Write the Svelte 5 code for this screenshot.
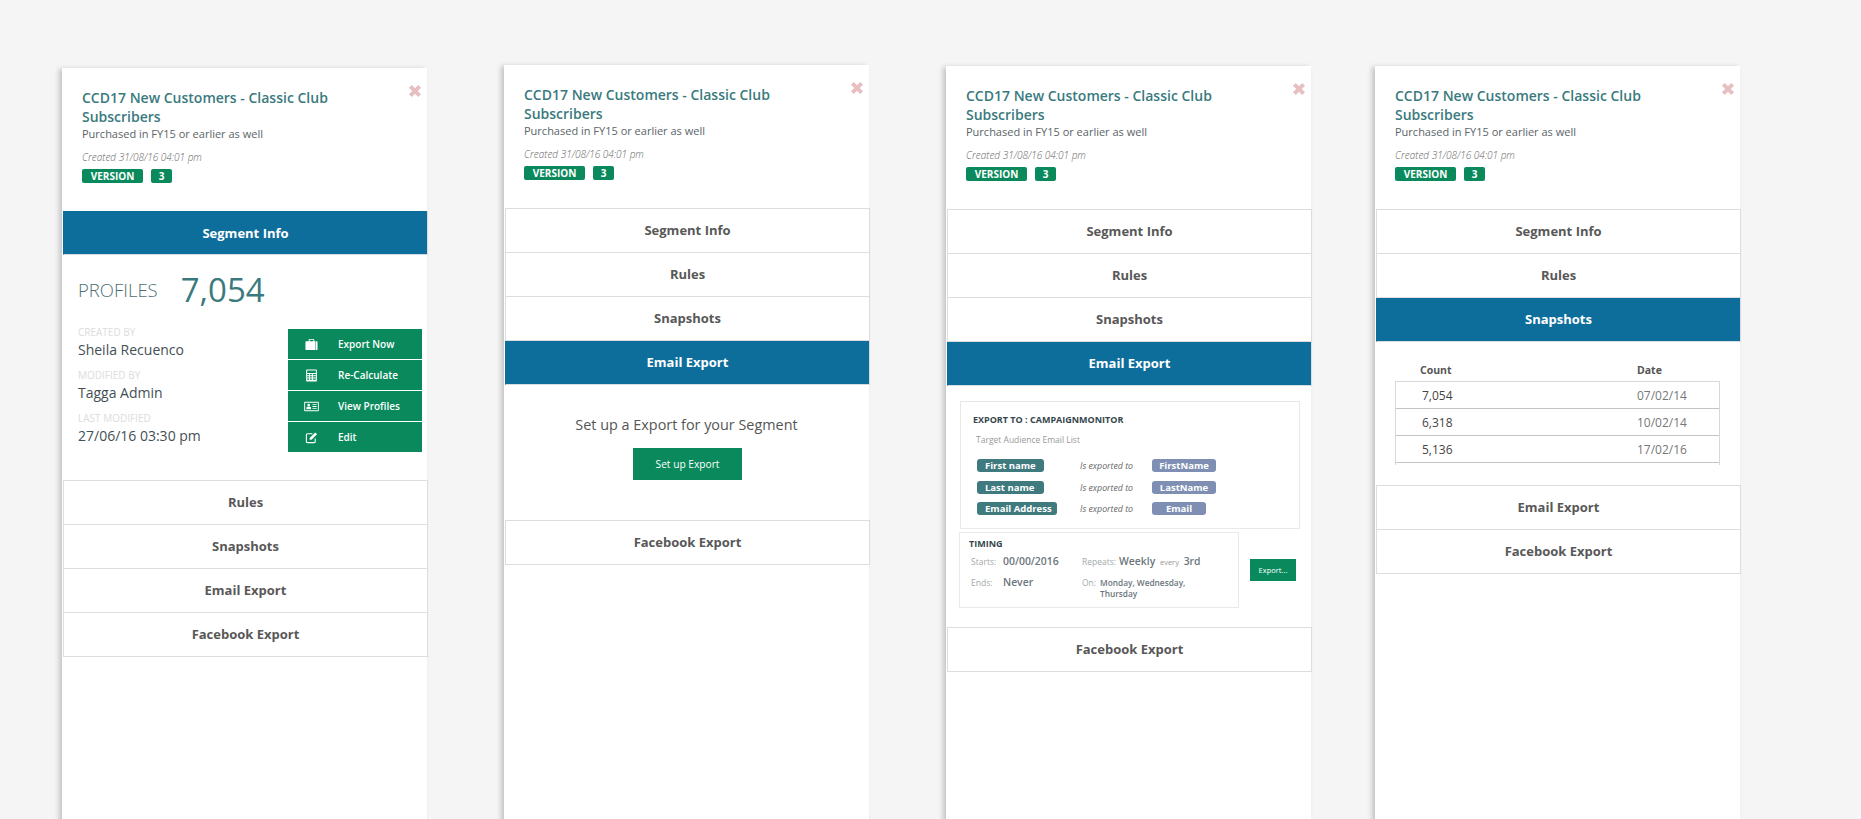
<script>
  const title = 'CCD17 New Customers - Classic Club Subscribers';
  const mappings = [
    { from: 'First name', to: 'FirstName', fromW: 67, toW: 64 },
    { from: 'Last name', to: 'LastName', fromW: 67, toW: 64 },
    { from: 'Email Address', to: 'Email', fromW: 80, toW: 54 }
  ];
  const snapshots = [
    { count: '7,054', date: '07/02/14' },
    { count: '6,318', date: '10/02/14' },
    { count: '5,136', date: '17/02/16' }
  ];
  const meta = [
    { label: 'CREATED BY', value: 'Sheila Recuenco' },
    { label: 'MODIFIED BY', value: 'Tagga Admin' },
    { label: 'LAST MODIFIED', value: '27/06/16 03:30 pm' }
  ];
</script>

{#snippet header()}
  <div class="head">
    <svg class="close" viewBox="0 0 12 12" aria-hidden="true"><path d="M2 2 L10 10 M10 2 L2 10" stroke="#e8bfc0" stroke-width="3.4" /></svg>
    <h2>{title}</h2>
    <p class="sub">Purchased in FY15 or earlier as well</p>
    <p class="created">Created 31/08/16 04:01 pm</p>
    <div class="badges">
      <span class="badge version">VERSION</span>
      <span class="badge num">3</span>
    </div>
  </div>
{/snippet}

{#snippet tab(label, active = false)}
  <div class="tab" class:active>{label}</div>
{/snippet}

<div class="page">
  <section class="card c1">
    {@render header()}
    {@render tab('Segment Info', true)}
    <div class="info">
      <div class="profiles">
        <span class="pl">PROFILES</span>
        <span class="pn">7,054</span>
      </div>
      <div class="info-row">
        <div class="meta">
          {#each meta as m}
            <div class="mlabel">{m.label}</div>
            <div class="mvalue">{m.value}</div>
          {/each}
        </div>
        <div class="actions">
          <button>
            <svg viewBox="0 0 14 14"><path fill="#fff" fill-rule="evenodd" d="M1 3.5h2V13H1.500a1 1 0 0 1-1-1V4.500a1 1 0 0 1 .5-1zM4 3.500V2a1 1 0 0 1 1-1h4a1 1 0 0 1 1 1v1.500h1V13H3V3.500zM5 3.500h4V2H5zM11.500 3.500H13a1 1 0 0 1 .5 1V12a1 1 0 0 1-1 1h-1z" /></svg>
            Export Now
          </button>
          <button>
            <svg viewBox="0 0 14 14"><path fill="#fff" fill-rule="evenodd" d="M2 .5h10a.8.8 0 0 1 .8.8v11.400a.8.8 0 0 1-.8.8H2a.8.8 0 0 1-.8-.8V1.300A.8.8 0 0 1 2 .5zM2.300 1.700v2.500h9.400V1.700zM2.300 5.300v1.500h2V5.300zm3 0v1.500h2V5.300zm3.200 0v1.500h3.200V5.300zM2.300 7.700v1.500h2V7.700zm3 0v1.500h2V7.700zm3.200 0v1.500h3.200V7.700zM2.300 10.100v1.500h2v-1.500zm3 0v1.500h2v-1.500zm3.200 0v1.500h3.200v-1.500z" /></svg>
            Re-Calculate
          </button>
          <button>
            <svg class="wide" viewBox="0 0 16 12"><path fill="#fff" fill-rule="evenodd" d="M1 1h14a.8.8 0 0 1 .8.8v8.400a.8.8 0 0 1-.8.8H1a.8.8 0 0 1-.8-.8V1.800A.8.8 0 0 1 1 1zM1.200 2v8h13.600V2zM5 3a1.400 1.400 0 1 1 0 2.900A1.400 1.400 0 0 1 5 3zM2.500 9V7.500c0-.8.8-1.200 1.500-1.200h2c.7 0 1.500.4 1.500 1.200V9zM9 3.500h4.500v1H9zm0 2h4.500v1H9zm0 2h4.500v1H9z" /></svg>
            View Profiles
          </button>
          <button>
            <svg viewBox="0 0 14 14"><path fill="none" stroke="#fff" stroke-width="1.200" d="M11 8v3.500a1 1 0 0 1-1 1H2.500a1 1 0 0 1-1-1V4a1 1 0 0 1 1-1H8" /><path fill="#fff" d="M5 7.500 11 1.500l2 2-6 6H5z" /></svg>
            Edit
          </button>
        </div>
      </div>
    </div>
    {@render tab('Rules')}
    {@render tab('Snapshots')}
    {@render tab('Email Export')}
    {@render tab('Facebook Export')}
  </section>

  <section class="card c2">
    {@render header()}
    {@render tab('Segment Info')}
    {@render tab('Rules')}
    {@render tab('Snapshots')}
    {@render tab('Email Export', true)}
    <div class="setup">
      <p>Set up a Export for your Segment</p>
      <button>Set up Export</button>
    </div>
    {@render tab('Facebook Export')}
  </section>

  <section class="card c3">
    {@render header()}
    {@render tab('Segment Info')}
    {@render tab('Rules')}
    {@render tab('Snapshots')}
    {@render tab('Email Export', true)}
    <div class="export">
      <div class="target">
        <h3>EXPORT TO : CAMPAIGNMONITOR</h3>
        <p class="list">Target Audience Email List</p>
        <div class="maps">
          {#each mappings as m}
            <span class="pill from" style="width:{m.fromW}px">{m.from}</span>
            <span class="arrow">Is exported to</span>
            <span class="pill to" style="width:{m.toW}px">{m.to}</span>
          {/each}
        </div>
      </div>
      <div class="timing-row">
        <div class="timing">
          <h3>TIMING</h3>
          <div class="t-grid">
            <span class="k">Starts:</span><b>00/00/2016</b>
            <span class="k">Repeats:</span><span class="rep"><b>Weekly</b> <i>every</i> <b>3rd</b></span>
            <span class="k">Ends:</span><b>Never</b>
            <span class="k">On:</span><b class="days">Monday, Wednesday, Thursday</b>
          </div>
        </div>
        <button class="mini">Export...</button>
      </div>
    </div>
    {@render tab('Facebook Export')}
  </section>

  <section class="card c4">
    {@render header()}
    {@render tab('Segment Info')}
    {@render tab('Rules')}
    {@render tab('Snapshots', true)}
    <div class="snaps">
      <div class="snap-head"><span>Count</span><span>Date</span></div>
      <div class="snap-table">
        {#each snapshots as s}
          <div class="snap-row"><span class="cnt">{s.count}</span><span class="dt">{s.date}</span></div>
        {/each}
      </div>
    </div>
    {@render tab('Email Export')}
    {@render tab('Facebook Export')}
  </section>
</div>

<style>
  :global(body) {
    margin: 0;
    background: #f5f5f5;
  }
  .page {
    display: flex;
    align-items: flex-start;
    height: 819px;
    overflow: hidden;
    padding-left: 62px;
    font-family: 'Open Sans', 'Noto Sans', sans-serif;
    color: #555;
  }
  .card {
    position: relative;
    flex: none;
    width: 365px;
    height: 800px;
    background: #fff;
    box-shadow: -3px 1px 5px rgba(0, 0, 0, 0.2);
  }
  .c1 { margin-top: 68px; }
  .c2 { margin-top: 65px; margin-left: 77px; }
  .c3 { margin-top: 66px; margin-left: 77px; }
  .c4 { margin-top: 66px; margin-left: 64px; }

  .head {
    box-sizing: border-box;
    height: 143px;
    padding: 20px 20px 0;
  }
  .close {
    position: absolute;
    top: 16px;
    right: 5px;
    width: 14px;
    height: 14px;
  }
  h2 {
    margin: 0;
    width: 270px;
    font-size: 14px;
    line-height: 19px;
    font-weight: 600;
    color: #3a7a7e;
  }
  .sub {
    margin: 0;
    font-size: 11px;
    line-height: 16px;
    color: #5a6468;
  }
  .created {
    margin: 8px 0 0;
    font-size: 10px;
    line-height: 14px;
    font-style: italic;
    font-weight: 300;
    color: #666;
  }
  .badges {
    display: flex;
    gap: 8px;
    margin-top: 5px;
  }
  .badge {
    height: 14px;
    border-radius: 2px;
    background: #0a8a5c;
    color: #fff;
    font-size: 10px;
    line-height: 14px;
    font-weight: 700;
    text-align: center;
  }
  .version { width: 61px; }
  .num { width: 21px; }

  .tab {
    box-sizing: border-box;
    height: 44px;
    margin: 0 -1px 0 1px;
    padding-bottom: 2px;
    border: 1px solid #ddd;
    border-top-width: 0;
    display: flex;
    align-items: center;
    justify-content: center;
    font-size: 13px;
    font-weight: 700;
    color: #585858;
  }
  .head + .tab,
  .info + .tab,
  .setup + .tab,
  .export + .tab,
  .snaps + .tab {
    height: 45px;
    border-top-width: 1px;
  }
  .tab.active,
  .head + .tab.active {
    height: 44px;
    background: #0e6e9b;
    color: #fff;
    border-color: #0e6e9b;
    border-right-color: #d5dde3;
    border-bottom-color: #d5dde3;
    border-top-width: 0;
  }
  .head + .tab.active {
    padding-bottom: 0;
  }

  .info {
    box-sizing: border-box;
    height: 225px;
    padding: 15px 5px 0 16px;
  }
  .profiles {
    display: flex;
    align-items: center;
    height: 38px;
    gap: 23px;
    color: #3a7a7e;
  }
  .pl {
    font-size: 18.5px;
    font-weight: 300;
    color: #4d6f75;
  }
  .pn {
    font-size: 33px;
    font-weight: 400;
  }
  .info-row {
    display: flex;
    justify-content: space-between;
    margin-top: 20px;
  }
  .meta {
    margin-top: -3px;
  }
  .mlabel {
    font-size: 10px;
    line-height: 14px;
    color: #dcdcdc;
  }
  .mvalue {
    font-size: 14px;
    line-height: 22px;
    color: #444f55;
    margin-bottom: 7px;
  }
  .actions {
    display: flex;
    flex-direction: column;
    gap: 1px;
    width: 134px;
    margin-top: 1px;
  }
  .actions button {
    display: flex;
    align-items: center;
    height: 30px;
    padding: 0 0 0 17px;
    border: 0;
    background: #0a8a5c;
    color: #fff;
    font-family: inherit;
    font-size: 10px;
    font-weight: 600;
  }
  .actions svg {
    width: 13px;
    height: 13px;
    margin-right: 20px;
  }
  .actions svg.wide {
    width: 15px;
    margin: 0 19px 0 -1px;
  }

  .setup {
    box-sizing: border-box;
    height: 135px;
    padding-top: 30px;
    text-align: center;
  }
  .setup p {
    margin: 0 0 13px;
    font-size: 14.4px;
    line-height: 20px;
    color: #555;
  }
  .setup button {
    width: 109px;
    height: 32px;
    margin-left: 2px;
    border: 0;
    background: #0a8a5c;
    color: #fff;
    font-family: inherit;
    font-size: 10.2px;
  }

  .export {
    box-sizing: border-box;
    height: 241px;
    padding: 15px 0 0 13px;
  }
  .target {
    box-sizing: border-box;
    width: 340px;
    height: 128px;
    margin-left: 1px;
    border: 1px solid #e8e8e8;
    padding: 11px 12px 0;
  }
  h3 {
    margin: 0;
    font-size: 9px;
    line-height: 13px;
    font-weight: 700;
    color: #36464c;
  }
  .list {
    margin: 7px 0 13px 3px;
    font-size: 8.5px;
    line-height: 13px;
    color: #999;
  }
  .maps {
    display: grid;
    grid-template-columns: 103px 72px auto;
    row-gap: 9px;
    align-items: center;
    justify-items: start;
    margin-left: 4px;
  }
  .maps > :nth-last-child(-n + 3) {
    margin-top: -1px;
  }
  .pill {
    box-sizing: border-box;
    height: 13px;
    border-radius: 3px;
    color: #fff;
    font-size: 9.5px;
    line-height: 13px;
    font-weight: 700;
  }
  .from {
    background: #3f7a7f;
    padding-left: 8px;
  }
  .to {
    background: #7e8fb3;
    text-align: center;
  }
  .arrow {
    font-size: 8.8px;
    font-style: italic;
    color: #666;
  }

  .timing-row {
    display: flex;
    align-items: center;
    margin-top: 3px;
  }
  .timing {
    box-sizing: border-box;
    width: 280px;
    height: 76px;
    border: 1px solid #eaeaea;
    padding: 4px 9px 0;
  }
  .t-grid {
    display: grid;
    grid-template-columns: 32px 79px 37px 1fr;
    row-gap: 5px;
    margin: 4px 0 0 2px;
    align-items: start;
    font-size: 10.4px;
    line-height: 15px;
    color: #6b767c;
  }
  .t-grid b {
    font-weight: 600;
  }
  .k {
    font-size: 8.5px;
    color: #a2a8ab;
  }
  .rep i {
    font-style: normal;
    font-size: 7.5px;
    color: #999;
    margin: 0 2px;
  }
  .t-grid .days {
    font-size: 8.3px;
    line-height: 11px;
    margin: 2px 0 0 -19px;
    width: 100px;
    display: block;
  }
  .mini {
    width: 46px;
    height: 22px;
    margin-left: 11px;
    border: 0;
    padding: 0;
    background: #0a8a5c;
    color: #fff;
    font-family: inherit;
    font-size: 7.5px;
  }

  .snaps {
    box-sizing: border-box;
    height: 143px;
    padding: 21px 20px 0 20px;
  }
  .snap-head {
    display: flex;
    height: 18px;
    padding-left: 25px;
    font-size: 10.5px;
    line-height: 15px;
    font-weight: 700;
    color: #555;
  }
  .snap-head span:first-child { width: 217px; }
  .snap-table {
    width: 325px;
    box-sizing: border-box;
    height: 84px;
    border: solid #d8d8d8;
    border-width: 1px 1px 0;
  }
  .snap-row {
    box-sizing: border-box;
    display: flex;
    align-items: center;
    height: 27px;
    border-bottom: 1px solid #c4c4c4;
    padding-left: 26px;
    font-size: 12px;
  }
  .cnt { width: 215px; color: #444; }
  .dt { color: #777; }
</style>
